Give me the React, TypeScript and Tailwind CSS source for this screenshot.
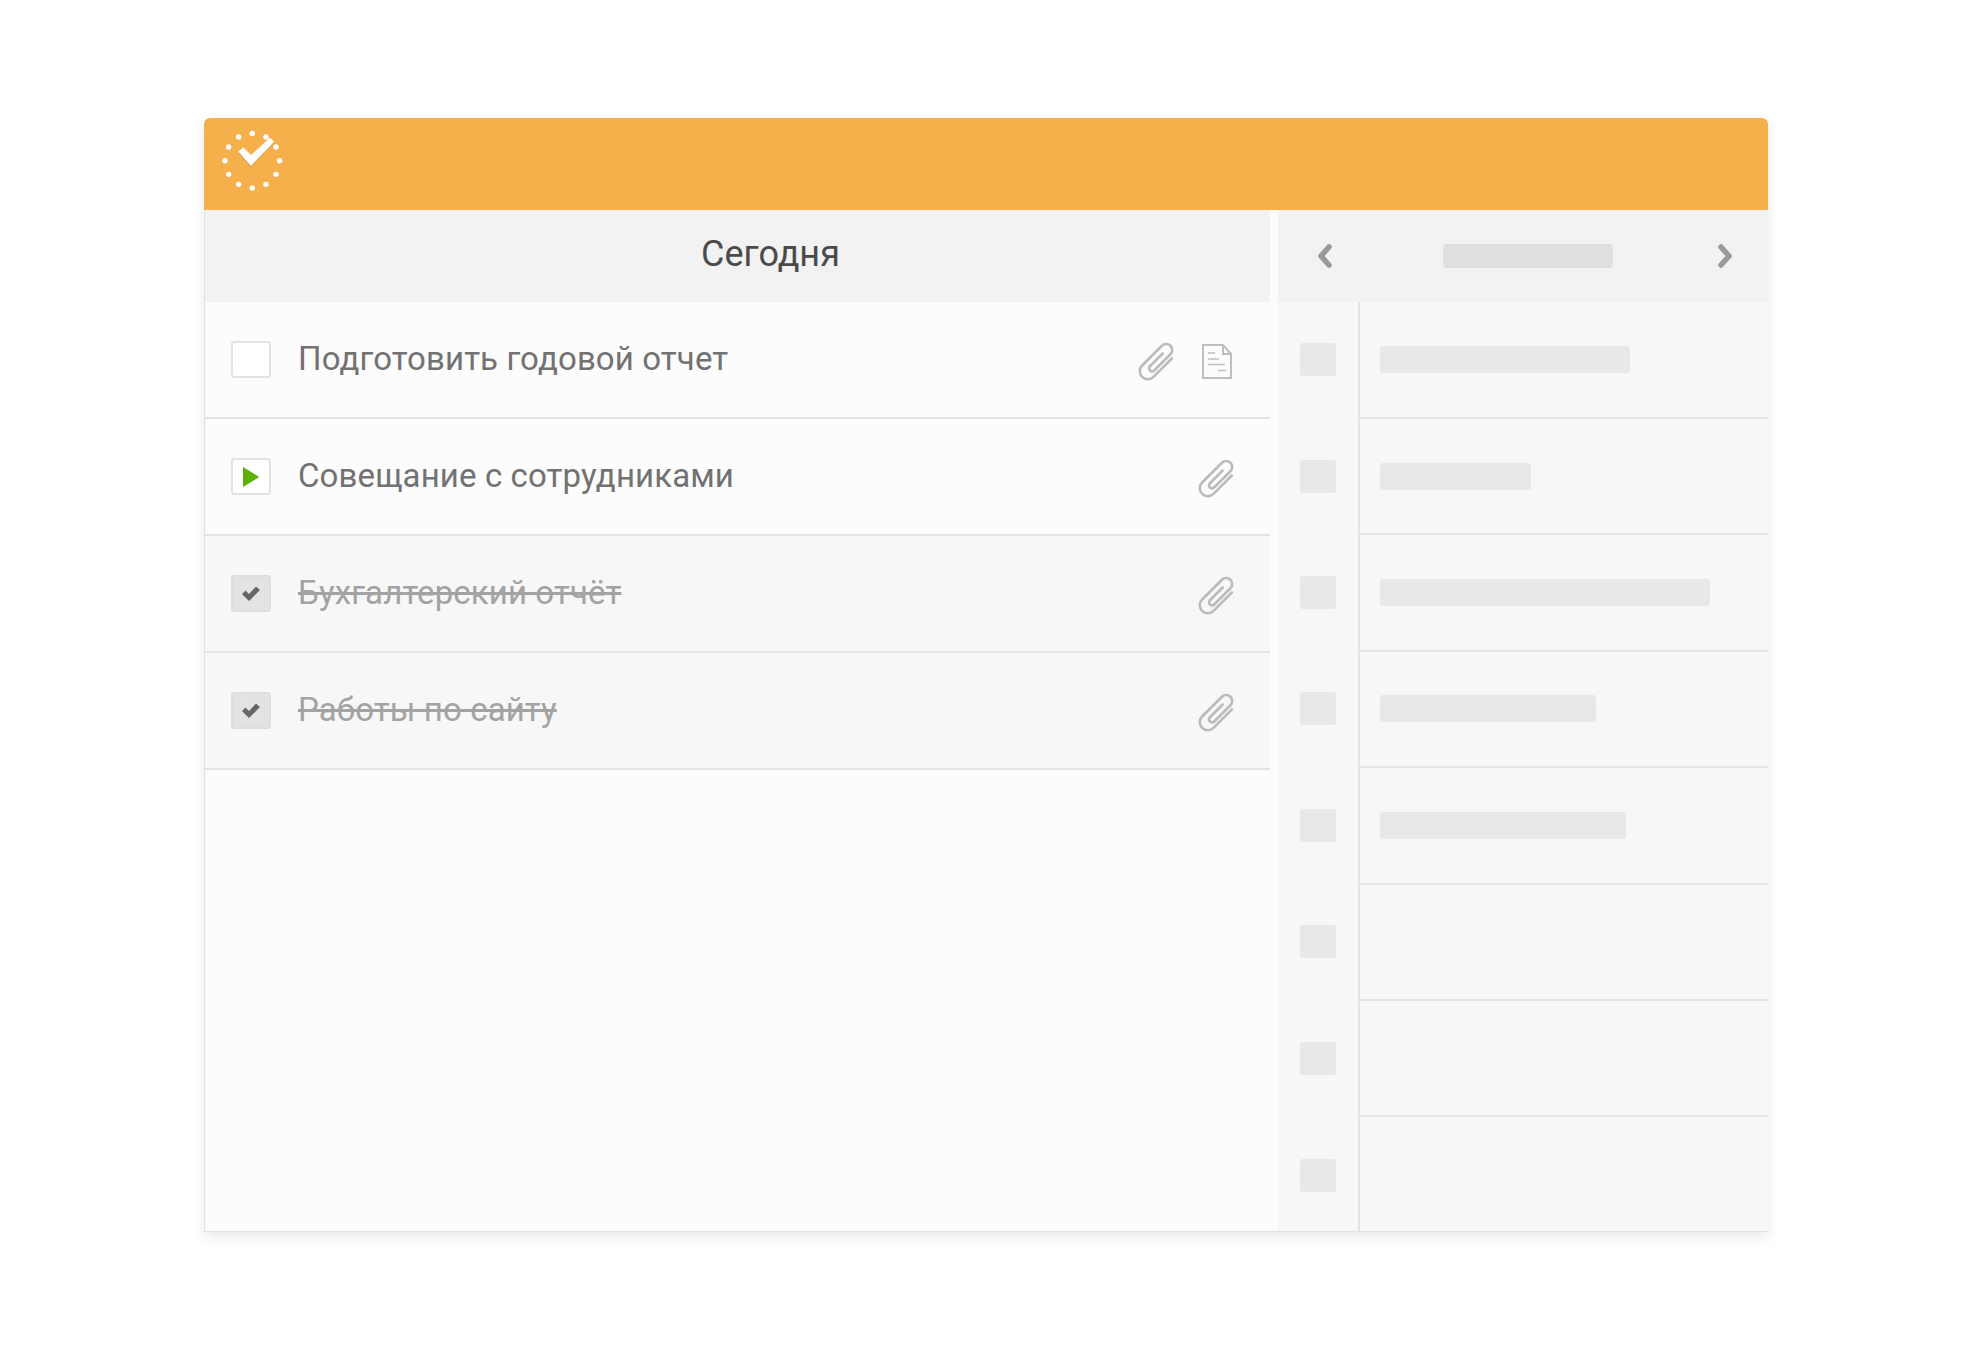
import React from 'react';

const tasks = [
  { title: 'Подготовить годовой отчет', state: 'todo', doc: true },
  { title: 'Совещание с сотрудниками', state: 'active', doc: false },
  { title: 'Бухгалтерский отчёт', state: 'done', doc: false },
  { title: 'Работы по сайту', state: 'done', doc: false },
];

const sideBars = [
  'w-[250px]',
  'w-[151px]',
  'w-[330px]',
  'w-[216px]',
  'w-[246px]',
  '',
  '',
  '',
];

const Logo = () => {
  const dots = Array.from({ length: 12 }, (_, i) => (i * Math.PI) / 6);
  return (
    <svg width="66" height="66" viewBox="0 0 66 66">
      {dots.map((a) => (
        <circle key={a} cx={33.3 + 27.3 * Math.cos(a)} cy={32.7 + 27.3 * Math.sin(a)} r="2.7" fill="#fff" />
      ))}
      <polygon points="19.3,24.7 24.3,20.3 32,28 51,10.7 55.3,14.7 32,39" fill="#b98034" opacity="0.6" />
      <polygon points="19.3,23.7 24.3,19.3 32,27 51,9.7 55.3,13.7 32,38" fill="#fff" />
    </svg>
  );
};

const Clip = () => (
  <svg className="mt-1" width="40" height="40" viewBox="-20 -20 40 40" fill="none" stroke="#bbb" strokeWidth="2.6" strokeLinecap="round">
    <g transform="rotate(45)">
      <path d="M8 -13 V13 A8 8 0 0 1 -8 13 V-15 A6 6 0 0 1 4 -15 V8 A3 3 0 0 1 -2 8 V-10" />
    </g>
  </svg>
);

const Doc = () => (
  <svg className="mt-1 mr-[5px]" width="30" height="35" viewBox="0 0 30 35" fill="none" stroke="#bfbfbf" strokeWidth="2">
    <path d="M1 1 H21 L29 10 V34 H1 Z" />
    <path d="M21 1 V10 H29" />
    <path d="M6 9 H13 M6 15 H17 M6 20.5 H23 M16 26.5 H24" strokeWidth="1.6" />
  </svg>
);

const TaskBox = ({ state }: { state: string }) => {
  if (state === 'done') {
    return (
      <div className="w-10 h-[37px] shrink-0 rounded-[3px] border-2 border-[#dedede] bg-[#e3e3e3] flex items-center justify-center">
        <svg width="18" height="15" viewBox="0 0 18 15">
          <polygon points="0,8 3.5,4.5 7,8 14,0.5 18,4 7,15" fill="#666" />
        </svg>
      </div>
    );
  }
  return (
    <div className="w-10 h-[37px] shrink-0 rounded-[3px] border-2 border-[#e3e3e3] bg-white flex items-center justify-center">
      {state === 'active' && (
        <svg width="16" height="20" viewBox="0 0 16 20">
          <polygon points="0,0.5 15.5,10 0,19.5" fill="#5cb000" stroke="#5cb000" strokeLinejoin="round" />
        </svg>
      )}
    </div>
  );
};

export default function App() {
  return (
    <div className="min-h-[1350px] bg-white pt-[118px] pl-[204px] font-['Roboto',sans-serif]">
      <div className="w-[1564px] h-[1114px] flex flex-col rounded-t-[6px] overflow-hidden shadow-[0_5px_14px_rgba(0,0,0,0.09)]">
        {/* Orange top bar */}
        <div className="h-[92px] shrink-0 bg-[#f6b04b] pl-[15px] pt-[10px]">
          <Logo />
        </div>

        <div className="flex flex-1 min-h-0 bg-[#fcfcfc] border-l border-b border-[#e2e2e2]">
          {/* Task list */}
          <div className="w-[1065px] shrink-0 flex flex-col">
            <div className="h-[92px] bg-[#f2f2f2] flex items-center justify-center pl-[66px] pb-1 text-[36px] text-[#4a4a4a]">
              Сегодня
            </div>
            {tasks.map((t) => (
              <div
                key={t.title}
                className={`h-[117px] flex items-center pl-[26px] pr-[33px] border-b-2 border-[#e4e4e4] ${t.state === 'done' ? 'bg-[#f7f7f7]' : ''}`}
              >
                <TaskBox state={t.state} />
                <div
                  className={`ml-[27px] flex-1 pb-[2px] text-[33px] tracking-[0.12px] ${t.state === 'done' ? 'text-[#a3a3a3] line-through' : 'text-[#727272]'}`}
                >
                  {t.title}
                </div>
                <div className="flex items-center gap-[25px]">
                  <Clip />
                  {t.doc && <Doc />}
                </div>
              </div>
            ))}
          </div>

          {/* Side calendar */}
          <div className="ml-2 flex-1 flex flex-col bg-[#f7f7f7]">
            <div className="h-[92px] shrink-0 bg-[#f2f2f2] flex items-center justify-between pl-10 pr-9">
              <svg width="14" height="24" viewBox="0 0 14 24" fill="none" stroke="#999" strokeWidth="5.5" strokeLinecap="round" strokeLinejoin="round">
                <path d="M11 3 L3 12 L11 21" />
              </svg>
              <div className="ml-[6px] w-[170px] h-6 rounded-[4px] bg-[#e0e0e0]" />
              <svg width="14" height="24" viewBox="0 0 14 24" fill="none" stroke="#999" strokeWidth="5.5" strokeLinecap="round" strokeLinejoin="round">
                <path d="M3 3 L11 12 L3 21" />
              </svg>
            </div>
            <div className="flex-1 min-h-0 flex flex-col">
              {sideBars.map((w, i) => (
                <div key={i} className={`flex shrink-0 ${i === 0 ? 'h-[117px]' : i < 7 ? 'h-[116.4px]' : 'h-[114px]'}`}>
                  <div className={`w-[80px] shrink-0 flex items-center pl-[22px] ${i < 7 ? 'pb-[2px]' : 'pt-[2px]'}`}>
                    <div className="w-9 h-[33px] rounded-[3px] bg-[#e8e8e8]" />
                  </div>
                  <div className={`flex-1 flex items-center pl-5 border-l-2 border-[#e2e2e2] ${i < 7 ? 'border-b-2 border-b-[#e4e4e4]' : ''}`}>
                    {w && <div className={`h-[27px] rounded-[3px] bg-[#e8e8e8] ${w}`} />}
                  </div>
                </div>
              ))}
            </div>
          </div>
        </div>
      </div>
    </div>
  );
}
